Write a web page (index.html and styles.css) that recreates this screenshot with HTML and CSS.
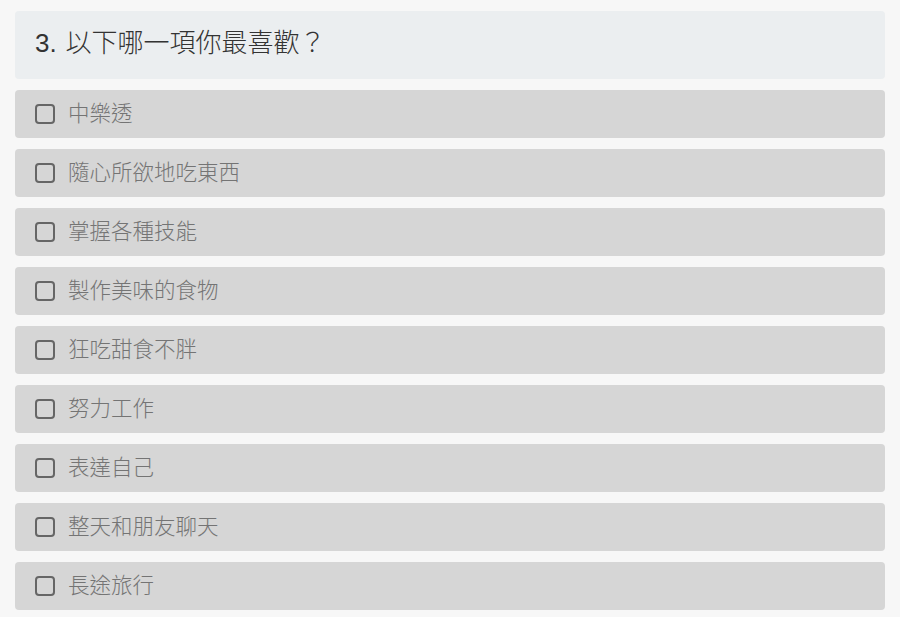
FILE: index.html
```html
<!DOCTYPE html>
<html lang="zh-Hant">
<head>
<meta charset="utf-8">
<title>Question 3</title>
<link rel="stylesheet" href="styles.css">
</head>
<body>
<div class="quiz">
  <div class="question"><span class="num">3.</span> 以下哪一項你最喜歡？</div>
  <label class="option"><span class="box"></span><span class="text">中樂透</span></label>
  <label class="option"><span class="box"></span><span class="text">隨心所欲地吃東西</span></label>
  <label class="option"><span class="box"></span><span class="text">掌握各種技能</span></label>
  <label class="option"><span class="box"></span><span class="text">製作美味的食物</span></label>
  <label class="option"><span class="box"></span><span class="text">狂吃甜食不胖</span></label>
  <label class="option"><span class="box"></span><span class="text">努力工作</span></label>
  <label class="option"><span class="box"></span><span class="text">表達自己</span></label>
  <label class="option"><span class="box"></span><span class="text">整天和朋友聊天</span></label>
  <label class="option"><span class="box"></span><span class="text">長途旅行</span></label>
</div>
</body>
</html>
```
FILE: styles.css
```css
html, body {
  margin: 0;
  padding: 0;
  background: #f7f7f7;
}
body {
  font-family: "Noto Sans CJK TC", "Noto Sans", sans-serif;
}
.quiz {
  padding: 11px 15px;
  display: flex;
  flex-direction: column;
  gap: 11px;
}
.question {
  height: 68px;
  box-sizing: border-box;
  background: #ebeef0;
  border-radius: 4px;
  padding: 12px 20px 0;
  font-size: 26px;
  line-height: 36px;
  font-weight: 300;
  color: #333;
  white-space: pre;
}
.question .num {
  font-family: "Liberation Sans", sans-serif;
  font-weight: 400;
  margin-right: 3px;
}
.option {
  height: 48px;
  box-sizing: border-box;
  background: #d6d6d6;
  border-radius: 4px;
  padding: 0 20px;
  display: flex;
  align-items: center;
  gap: 13px;
  font-size: 21.5px;
  font-weight: 300;
  color: #747474;
}
.box {
  width: 20px;
  height: 20px;
  box-sizing: border-box;
  border: 2px solid #666;
  border-radius: 4px;
  flex: none;
}
.text {
  line-height: 1;
  padding-bottom: 4px;
}
```
